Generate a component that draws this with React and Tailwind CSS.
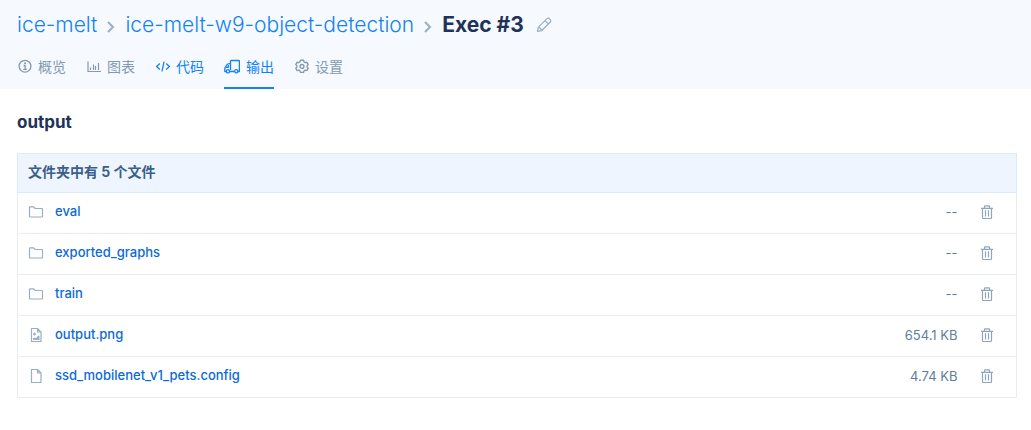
import React from "react";

function Icon({ className, size = 16, box = 16, sw = 1.2, children }) {
  return (
    <svg
      aria-hidden="true"
      width={size}
      height={size}
      viewBox={`0 0 ${box} ${box}`}
      fill="none"
      stroke="currentColor"
      strokeWidth={sw}
      strokeLinejoin="round"
      className={`shrink-0 ${className || ""}`}
    >
      {children}
    </svg>
  );
}

const InfoIcon = () => (
  <Icon size={15} box={15} sw={1.3}>
    <circle cx="8" cy="7.2" r="5.9" />
    <path d="M6.6 6.5H8.2V10.2M6.3 10.4H9.9" />
    <circle cx="8" cy="4.2" r="1" fill="currentColor" stroke="none" />
  </Icon>
);

const ChartIcon = () => (
  <Icon size={15} box={15} sw={1.2}>
    <path d="M2 2.5V12.5H15" />
    <path d="M4.5 8.5V11M7.5 5.5V11M9.5 7V11M12.5 4V11" />
  </Icon>
);

const CodeIcon = () => (
  <Icon size={15} box={15} sw={1.3}>
    <path d="M4.8 4.5L1.6 7.5L4.8 10.5M11.2 4.5L14.4 7.5L11.2 10.5M9.1 2.7L6.9 12.3" />
  </Icon>
);

const TruckIcon = () => (
  <Icon size={16} box={16} sw={1.3}>
    <path d="M5.6 12.5H10.6M6.5 11V2.2C6.5 1.7 6.8 1.5 7.2 1.5H14.7C15.2 1.5 15.4 1.8 15.4 2.2V12.5H14M6.5 4.6H5.2C3.6 4.6 2.6 5.6 2 7L.8 9.4V12.5H2.2" />
    <path d="M4.4 6V8.4H2" />
    <circle cx="3.9" cy="12.3" r="1.6" />
    <circle cx="12.3" cy="12.3" r="1.6" />
  </Icon>
);

const GearIcon = () => (
  <Icon size={15} box={15} sw={1.4}>
    <path d="M6.5 1.3H9.5L10.1 3L11.2 3.6L13 3.3L14.2 5.6L13 6.9V7.9L14.2 9.2L13 11.5L11.2 11.1L10.1 11.8L9.5 13.4H6.5L5.9 11.8L4.8 11.1L3 11.5L1.8 9.2L3 7.9V6.9L1.8 5.6L3 3.3L4.8 3.6L5.9 3Z" />
    <circle cx="8" cy="7.4" r="1.9" />
  </Icon>
);

const PencilIcon = () => (
  <Icon size={16} sw={1.2}>
    <path d="M1.5 14.3L2.2 10.4L10.7 1.9C11.8 .9 13 1.2 13.9 2.1C14.8 3 15.1 4.2 14.1 5.3L5.5 13.7ZM2.2 10.4C3.8 10.6 5.2 12 5.5 13.7M9 3.6L12.4 7" />
  </Icon>
);

const Chevron = () => (
  <Icon size={12} box={12} sw={2} className="mx-2 mt-1 text-[#9aaec4]">
    <path d="M3 1L8 6L3 11" strokeLinejoin="miter" />
  </Icon>
);

const FolderIcon = () => (
  <Icon sw={1.2}>
    <path d="M1.5 12.5V3.5C1.5 3 1.8 2.8 2.2 2.8H5.4L7.2 4.5H14C14.4 4.5 14.5 4.8 14.5 5.1V12.5C14.5 12.9 14.3 13 14 13H2C1.7 13 1.5 12.8 1.5 12.5Z" />
  </Icon>
);

const FileIcon = () => (
  <Icon sw={1.2}>
    <path d="M3.5 1.5H9.5L13 5V14.5H3.5ZM9.5 1.5V5H13" />
  </Icon>
);

const ImageIcon = () => (
  <Icon sw={1.2}>
    <path d="M3.5 1.5H9.5L13 5V14.5H3.5ZM9.5 1.5V5H13" />
    <path d="M5 13V11.2L6.5 10.4L8 11.2L10 8.8L11.5 8.8V13Z" fill="currentColor" stroke="none" />
    <path d="M6.5 5.6V8.6M5 7.1H8" />
  </Icon>
);

const TrashIcon = () => (
  <Icon sw={1.2}>
    <path d="M2 4.4H14M3.5 4.5V13.8C3.5 14.2 3.8 14.5 4.2 14.5H11.8C12.2 14.5 12.5 14.2 12.5 13.8V4.5M5.5 4.2V2.6C5.5 2.1 5.8 1.8 6.3 1.8H9.7C10.2 1.8 10.5 2.1 10.5 2.6V4.2M6.5 6.3V12.5M9.5 6.3V12.5" />
  </Icon>
);

const tabs = [
  { label: "概览", Glyph: InfoIcon, tone: "border-transparent text-[#829ab1]" },
  { label: "图表", Glyph: ChartIcon, tone: "border-transparent text-[#829ab1]" },
  { label: "代码", Glyph: CodeIcon, tone: "border-transparent text-[#1283f5]" },
  { label: "输出", Glyph: TruckIcon, tone: "border-[#1283f5] text-[#1283f5]", current: true },
  { label: "设置", Glyph: GearIcon, tone: "border-transparent text-[#829ab1]" },
];

const files = [
  { name: "eval", size: "--", Glyph: FolderIcon },
  { name: "exported_graphs", size: "--", Glyph: FolderIcon },
  { name: "train", size: "--", Glyph: FolderIcon },
  { name: "output.png", size: "654.1 KB", Glyph: ImageIcon },
  { name: "ssd_mobilenet_v1_pets.config", size: "4.74 KB", Glyph: FileIcon },
];

export default function App() {
  return (
    <div className="font-['Inter','Noto_Sans_CJK_SC',sans-serif]">
      <header className="bg-[#f6f9fe] px-[17px] pt-2">
        <div className="flex h-[34px] items-center text-[21px]">
          <a href="#owner" className="font-light text-[#1283f5]">ice-melt</a>
          <Chevron />
          <a href="#project" className="font-light text-[#1283f5]">ice-melt-w9-object-detection</a>
          <Chevron />
          <h1 className="font-bold text-[#1f3358]">Exec #3</h1>
          <button type="button" aria-label="重命名" className="ml-3 text-[#9aaec4]">
            <PencilIcon />
          </button>
        </div>
        <nav className="mt-1 flex gap-5 text-sm">
          {tabs.map(({ label, Glyph, tone, current }) => (
            <a
              key={label}
              href="#tab"
              aria-current={current ? "page" : undefined}
              className={`flex h-[43px] items-center gap-1.5 border-b-2 ${tone}`}
            >
              <Glyph />
              {label}
            </a>
          ))}
        </nav>
      </header>
      <main className="pr-3.5 pl-[17px]">
        <h2 className="pt-[21px] pb-[19px] text-[17px] leading-6 font-bold text-[#1f3358]">output</h2>
        <table className="w-full border-collapse border border-[#e9edf2] text-[13px]">
          <thead>
            <tr className="h-[39px] border border-[#dbeafc] bg-[#eff5fe] text-left text-sm text-[#3a5f8a]">
              <th colSpan={3} className="px-2.5 pb-0.5 font-bold">文件夹中有 5 个文件</th>
            </tr>
          </thead>
          <tbody>
            {files.map(({ name, size, Glyph }) => (
              <tr key={name} className="h-[41px] border-b border-[#e9edf2]">
                <td className="pb-0.5 pl-2.5">
                  <div className="flex items-center gap-[11px] text-[#9aaec4]">
                    <Glyph />
                    <a href="#file" className="font-medium text-[#0a6ad8]">{name}</a>
                  </div>
                </td>
                <td className="w-32 text-right text-[#627d9c]">{size}</td>
                <td className="w-[59px] pr-[21px] pb-0.5">
                  <button type="button" aria-label={`删除 ${name}`} className="ml-auto block text-[#8fa5bd]">
                    <TrashIcon />
                  </button>
                </td>
              </tr>
            ))}
          </tbody>
        </table>
      </main>
    </div>
  );
}
